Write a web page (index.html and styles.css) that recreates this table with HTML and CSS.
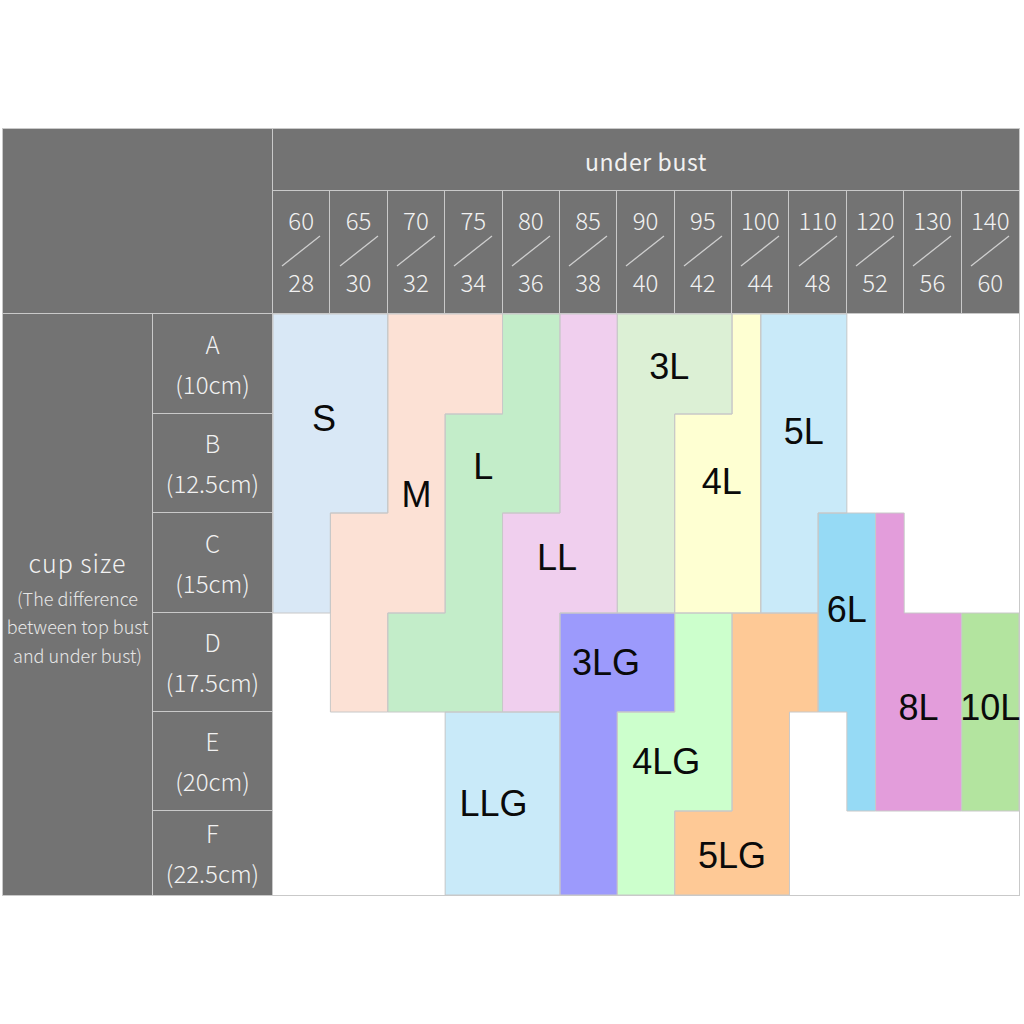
FILE: index.html
```html
<!DOCTYPE html>
<html lang="en">
<head>
<meta charset="utf-8">
<title>Size chart</title>
<link rel="stylesheet" href="styles.css">
</head>
<body>
<div class="page">
  <div class="chart">
    <div class="corner"></div>
    <div class="ub">under bust</div>
    <div class="nums">
      <div class="num"><span>60</span><svg class="slash" viewBox="0 0 40 32"><line x1="1" y1="31" x2="39" y2="1"/></svg><span>28</span></div>
      <div class="num"><span>65</span><svg class="slash" viewBox="0 0 40 32"><line x1="1" y1="31" x2="39" y2="1"/></svg><span>30</span></div>
      <div class="num"><span>70</span><svg class="slash" viewBox="0 0 40 32"><line x1="1" y1="31" x2="39" y2="1"/></svg><span>32</span></div>
      <div class="num"><span>75</span><svg class="slash" viewBox="0 0 40 32"><line x1="1" y1="31" x2="39" y2="1"/></svg><span>34</span></div>
      <div class="num"><span>80</span><svg class="slash" viewBox="0 0 40 32"><line x1="1" y1="31" x2="39" y2="1"/></svg><span>36</span></div>
      <div class="num"><span>85</span><svg class="slash" viewBox="0 0 40 32"><line x1="1" y1="31" x2="39" y2="1"/></svg><span>38</span></div>
      <div class="num"><span>90</span><svg class="slash" viewBox="0 0 40 32"><line x1="1" y1="31" x2="39" y2="1"/></svg><span>40</span></div>
      <div class="num"><span>95</span><svg class="slash" viewBox="0 0 40 32"><line x1="1" y1="31" x2="39" y2="1"/></svg><span>42</span></div>
      <div class="num"><span>100</span><svg class="slash" viewBox="0 0 40 32"><line x1="1" y1="31" x2="39" y2="1"/></svg><span>44</span></div>
      <div class="num"><span>110</span><svg class="slash" viewBox="0 0 40 32"><line x1="1" y1="31" x2="39" y2="1"/></svg><span>48</span></div>
      <div class="num"><span>120</span><svg class="slash" viewBox="0 0 40 32"><line x1="1" y1="31" x2="39" y2="1"/></svg><span>52</span></div>
      <div class="num"><span>130</span><svg class="slash" viewBox="0 0 40 32"><line x1="1" y1="31" x2="39" y2="1"/></svg><span>56</span></div>
      <div class="num"><span>140</span><svg class="slash" viewBox="0 0 40 32"><line x1="1" y1="31" x2="39" y2="1"/></svg><span>60</span></div>
    </div>

    <div class="cup">
      <div class="cup-title">cup size</div>
      <div class="cup-note">(The difference<br>between top bust<br>and under bust)</div>
    </div>

    <div class="letters">
      <div class="letter"><span>A</span><span>(10cm)</span></div>
      <div class="letter"><span>B</span><span>(12.5cm)</span></div>
      <div class="letter"><span>C</span><span>(15cm)</span></div>
      <div class="letter"><span>D</span><span>(17.5cm)</span></div>
      <div class="letter"><span>E</span><span>(20cm)</span></div>
      <div class="letter"><span>F</span><span>(22.5cm)</span></div>
    </div>

    <div class="grid">
      <div class="pc c-s s1"></div><div class="pc c-s s2"></div>
      <div class="pc c-m m1"></div><div class="pc c-m m2"></div><div class="pc c-m m3"></div><div class="pc c-m m4"></div>
      <div class="pc c-l l1"></div><div class="pc c-l l2"></div><div class="pc c-l l3"></div><div class="pc c-l l4"></div>
      <div class="pc c-ll ll1"></div><div class="pc c-ll ll2"></div><div class="pc c-ll ll3"></div>
      <div class="pc c-3l x3l1"></div><div class="pc c-3l x3l2"></div>
      <div class="pc c-4l x4l1"></div><div class="pc c-4l x4l2"></div>
      <div class="pc c-5l x5l1"></div><div class="pc c-5l x5l2"></div>
      <div class="pc c-6l x6l1"></div><div class="pc c-6l x6l2"></div>
      <div class="pc c-8l x8l1"></div><div class="pc c-8l x8l2"></div>
      <div class="pc c-10l x10l1"></div>
      <div class="pc c-3lg g3l1"></div><div class="pc c-3lg g3l2"></div>
      <div class="pc c-4lg g4l1"></div><div class="pc c-4lg g4l2"></div><div class="pc c-4lg g4l3"></div>
      <div class="pc c-5lg g5l1"></div><div class="pc c-5lg g5l2"></div><div class="pc c-5lg g5l3"></div>
      <div class="pc c-llg llg1"></div>

      <svg class="outlines" viewBox="0 0 26 581" preserveAspectRatio="none">
        <polygon points="0,0 4,0 4,199 2,199 2,299 0,299"/>
        <polygon points="4,0 8,0 8,100 6,100 6,299 4,299 4,398 2,398 2,199 4,199"/>
        <polygon points="8,0 10,0 10,199 8,199 8,398 4,398 4,299 6,299 6,100 8,100"/>
        <polygon points="10,0 12,0 12,299 10,299 10,398 8,398 8,199 10,199"/>
        <polygon points="12,0 16,0 16,100 14,100 14,299 12,299"/>
        <polygon points="16,0 17,0 17,299 14,299 14,100 16,100"/>
        <polygon points="17,0 20,0 20,199 19,199 19,299 17,299"/>
        <polygon points="19,199 21,199 21,497 20,497 20,398 19,398"/>
        <polygon points="21,199 22,199 22,299 24,299 24,497 21,497"/>
        <polygon points="24,299 26,299 26,497 24,497"/>
        <polygon points="10,299 14,299 14,398 12,398 12,581 10,581"/>
        <polygon points="14,299 16,299 16,497 14,497 14,581 12,581 12,398 14,398"/>
        <polygon points="16,299 19,299 19,398 18,398 18,581 14,581 14,497 16,497"/>
        <polygon points="6,398 10,398 10,581 6,581"/>
      </svg>

      <div class="lab lab-s">S</div>
      <div class="lab lab-m">M</div>
      <div class="lab lab-l">L</div>
      <div class="lab lab-ll">LL</div>
      <div class="lab lab-3l">3L</div>
      <div class="lab lab-4l">4L</div>
      <div class="lab lab-5l">5L</div>
      <div class="lab lab-6l">6L</div>
      <div class="lab lab-8l">8L</div>
      <div class="lab lab-10l">10L</div>
      <div class="lab lab-3lg">3LG</div>
      <div class="lab lab-llg">LLG</div>
      <div class="lab lab-4lg">4LG</div>
      <div class="lab lab-5lg">5LG</div>
    </div>
  </div>
</div>
</body>
</html>
```

FILE: styles.css
```css
* { box-sizing: border-box; }

body {
  margin: 0;
  background: #ffffff;
}

.page {
  padding: 128px 0 0 2px;
}

.chart {
  display: grid;
  grid-template-columns: 150px 120px 746px;
  grid-template-rows: 62px 123px 581px;
  width: 1018px;
  border: 1px solid #c9c9c9;
  font-family: "Noto Sans CJK JP", "Noto Sans", sans-serif;
  font-weight: 300;
  color: #f1f1f1;
}

.corner {
  grid-column: 1 / 3;
  grid-row: 1 / 3;
  background: #737373;
  border-right: 1px solid #c9c9c9;
  border-bottom: 1px solid #c9c9c9;
}

.ub {
  grid-column: 3;
  grid-row: 1;
  background: #737373;
  border-bottom: 1px solid #c9c9c9;
  display: flex;
  align-items: center;
  justify-content: center;
  font-size: 23px;
  font-weight: 400;
  padding-top: 3px;
  letter-spacing: 0.6px;
}

.nums {
  grid-column: 3;
  grid-row: 2;
  display: grid;
  grid-template-columns: repeat(13, 1fr);
  background: #737373;
  border-bottom: 1px solid #c9c9c9;
}

.num {
  display: flex;
  flex-direction: column;
  align-items: center;
  padding-top: 14px;
  font-size: 24px;
  line-height: 30px;
  border-right: 1px solid #c9c9c9;
}

.num:last-child {
  border-right: 0;
}

.slash {
  width: 40px;
  height: 32px;
  stroke: #cfcfcf;
  stroke-width: 1.3;
}

.cup {
  grid-column: 1;
  grid-row: 3;
  background: #737373;
  border-right: 1px solid #c9c9c9;
  display: flex;
  flex-direction: column;
  justify-content: center;
  align-items: center;
  text-align: center;
}

.cup-title {
  font-size: 25px;
  line-height: 44px;
  letter-spacing: 1px;
}

.cup-note {
  font-size: 18px;
  line-height: 28.5px;
  color: #e6e6e6;
}

.letters {
  grid-column: 2;
  grid-row: 3;
  display: grid;
  grid-template-rows: 100px 99px 100px 99px 99px 84px;
  background: #737373;
  border-right: 1px solid #c9c9c9;
}

.letter {
  display: flex;
  flex-direction: column;
  justify-content: center;
  align-items: center;
  font-size: 24px;
  line-height: 40px;
  border-bottom: 1px solid #c9c9c9;
}

.letter:last-child {
  border-bottom: 0;
}

/* chart body */
.grid {
  grid-column: 3;
  grid-row: 3;
  position: relative;
  display: grid;
  grid-template-columns: repeat(26, 1fr);
  grid-template-rows: 100px 99px 100px 99px 99px 84px;
  background: #ffffff;
}

.outlines {
  position: absolute;
  inset: 0;
  width: 100%;
  height: 100%;
  fill: none;
  stroke: #c8c8c8;
  stroke-width: 1;
  pointer-events: none;
}

.outlines polygon {
  vector-effect: non-scaling-stroke;
}

.c-s   { background: #d9e8f6; }
.c-m   { background: #fce1d5; }
.c-l   { background: #c3edc9; }
.c-ll  { background: #f0cfee; }
.c-3l  { background: #dcf0d5; }
.c-4l  { background: #feffd2; }
.c-5l  { background: #c9eaf9; }
.c-6l  { background: #96daf5; }
.c-8l  { background: #e39ddb; }
.c-10l { background: #b3e49f; }
.c-3lg { background: #9c9afc; }
.c-4lg { background: #ccffcc; }
.c-5lg { background: #fec996; }
.c-llg { background: #c9eaf9; }

/* grid-area: row-start / col-start / row-end / col-end */
.s1 { grid-area: 1 / 1 / 3 / 5; }
.s2 { grid-area: 3 / 1 / 4 / 3; }

.m1 { grid-area: 1 / 5 / 2 / 9; }
.m2 { grid-area: 2 / 5 / 3 / 7; }
.m3 { grid-area: 3 / 3 / 4 / 7; }
.m4 { grid-area: 4 / 3 / 5 / 5; }

.l1 { grid-area: 1 / 9 / 2 / 11; }
.l2 { grid-area: 2 / 7 / 3 / 11; }
.l3 { grid-area: 3 / 7 / 4 / 9; }
.l4 { grid-area: 4 / 5 / 5 / 9; }

.ll1 { grid-area: 1 / 11 / 3 / 13; }
.ll2 { grid-area: 3 / 9 / 4 / 13; }
.ll3 { grid-area: 4 / 9 / 5 / 11; }

.x3l1 { grid-area: 1 / 13 / 2 / 17; }
.x3l2 { grid-area: 2 / 13 / 4 / 15; }

.x4l1 { grid-area: 1 / 17 / 2 / 18; }
.x4l2 { grid-area: 2 / 15 / 4 / 18; }

.x5l1 { grid-area: 1 / 18 / 3 / 21; }
.x5l2 { grid-area: 3 / 18 / 4 / 20; }

.x6l1 { grid-area: 3 / 20 / 5 / 22; }
.x6l2 { grid-area: 5 / 21 / 6 / 22; }

.x8l1 { grid-area: 3 / 22 / 4 / 23; }
.x8l2 { grid-area: 4 / 22 / 6 / 25; }

.x10l1 { grid-area: 4 / 25 / 6 / 27; }

.g3l1 { grid-area: 4 / 11 / 5 / 15; }
.g3l2 { grid-area: 5 / 11 / 7 / 13; }

.g4l1 { grid-area: 4 / 15 / 5 / 17; }
.g4l2 { grid-area: 5 / 13 / 6 / 17; }
.g4l3 { grid-area: 6 / 13 / 7 / 15; }

.g5l1 { grid-area: 4 / 17 / 5 / 20; }
.g5l2 { grid-area: 5 / 17 / 6 / 19; }
.g5l3 { grid-area: 6 / 15 / 7 / 19; }

.llg1 { grid-area: 5 / 7 / 7 / 11; }

/* labels */
.lab {
  z-index: 2;
  display: flex;
  align-items: center;
  justify-content: center;
  font-family: "Liberation Sans", Arial, sans-serif;
  font-weight: 400;
  font-size: 36px;
  line-height: 1;
  color: #0a0a0a;
  white-space: nowrap;
}

.lab-s   { grid-area: 1 / 1 / 3 / 5;   margin: 11px 13px 0 0; }
.lab-m   { grid-area: 2 / 3 / 4 / 9;   margin: 0 0 38px 0; }
.lab-l   { grid-area: 2 / 7 / 3 / 10;  margin: 7px 10px 0 0; }
.lab-ll  { grid-area: 3 / 9 / 4 / 13;  margin: 0 6px 11px 0; }
.lab-3l  { grid-area: 1 / 13 / 2 / 17; margin: 6px 11px 0 0; }
.lab-4l  { grid-area: 2 / 15 / 4 / 18; margin: 0 0 64px 8px; }
.lab-5l  { grid-area: 1 / 18 / 3 / 21; margin: 37px 0 0 0; }
.lab-6l  { grid-area: 3 / 20 / 5 / 22; margin: 0 0 6px 0; }
.lab-8l  { grid-area: 4 / 22 / 6 / 25; margin: 0 0 9px 0; }
.lab-10l { grid-area: 4 / 25 / 6 / 27; margin: 0 0 9px 0; }
.lab-3lg { grid-area: 4 / 11 / 5 / 14; margin: 0 0 0 6px; }
.lab-llg { grid-area: 5 / 7 / 7 / 11;  margin: 0 18px 0 0; }
.lab-4lg { grid-area: 5 / 13 / 6 / 17; margin: 0 17px 0 0; }
.lab-5lg { grid-area: 6 / 15 / 7 / 19; margin: 6px 0 0 0; }
```
